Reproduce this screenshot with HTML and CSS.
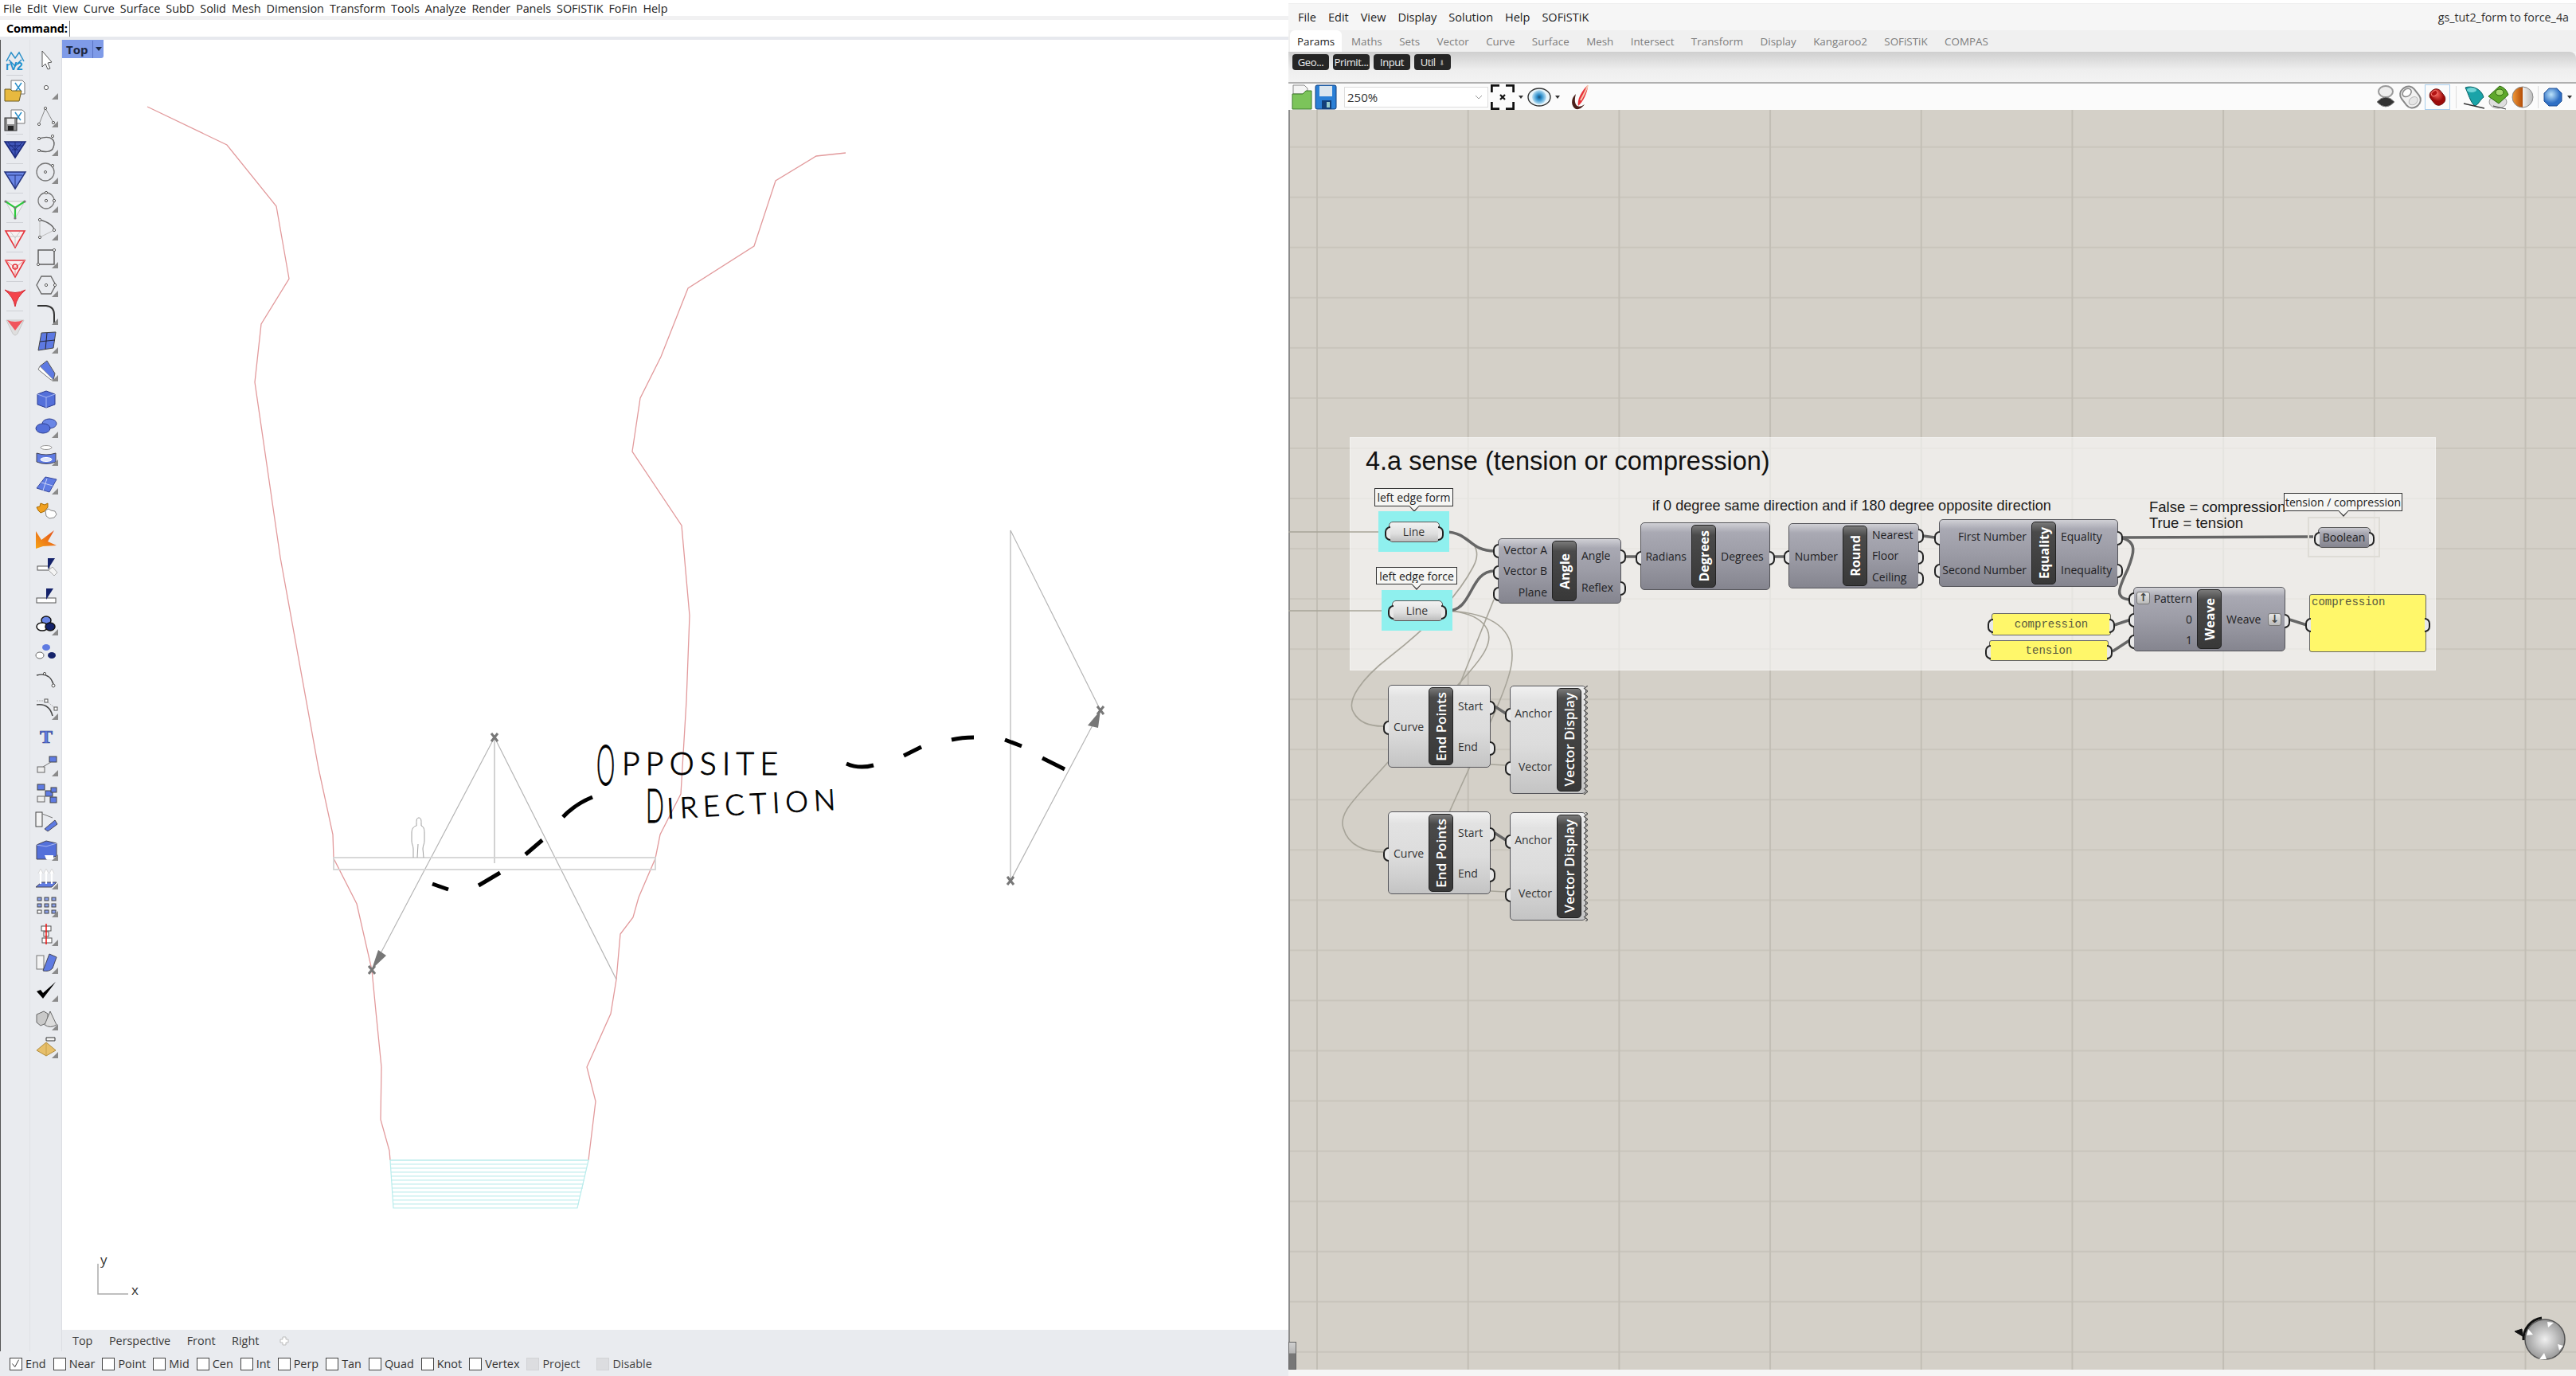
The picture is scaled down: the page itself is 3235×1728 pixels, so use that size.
FILE: index.html
```html
<!DOCTYPE html>
<html lang="en">
<head>
<meta charset="utf-8">
<title>Rhino and Grasshopper</title>
<link rel="stylesheet" href="styles.css">
</head>
<body>
<div class="app">
  <section class="left">
    <nav class="menu">
      <span>File</span><span>Edit</span><span>View</span><span>Curve</span><span>Surface</span><span>SubD</span><span>Solid</span><span>Mesh</span><span>Dimension</span><span>Transform</span><span>Tools</span><span>Analyze</span><span>Render</span><span>Panels</span><span>SOFiSTiK</span><span>FoFin</span><span>Help</span>
    </nav>
    <div class="strip-a"></div>
    <div class="cmd"><b>Command:</b><i class="caret"></i></div>
    <div class="strip-b"></div>
    <div class="body">
      <aside class="sidebar">
        <div class="col1">
          <div class="t1 sep"><svg class="ic" viewBox="0 0 28 28"><path d="M3 14 L9 3 L14 10 L19 3 L25 14 M6 12 L14 20 L22 12" fill="none" stroke="#2a8fc9" stroke-width="1.5"/><text x="2" y="25" class="rv">rV2</text></svg></div>
          <div class="t1"><svg class="ic" viewBox="0 0 28 28"><path d="M9 1 H23 L26 4 V18 H9 Z" fill="#fff" stroke="#777"/><path d="M14 4 L18 10 L22 4 M15 14 L18 10 L21 14" fill="none" stroke="#2a8fc9" stroke-width="1.5"/><path d="M1 12 H8 L10 14 H22 L19 27 H1 Z" fill="#e7b93f" stroke="#6b5a20"/></svg></div>
          <div class="t1 sep"><svg class="ic" viewBox="0 0 28 28"><path d="M9 1 H23 L26 4 V18 H9 Z" fill="#fff" stroke="#777"/><path d="M14 4 L18 10 L22 4 M15 14 L18 10 L21 14" fill="none" stroke="#2a8fc9" stroke-width="1.5"/><rect x="1" y="11" width="15" height="16" fill="#8d8d8d" stroke="#333"/><rect x="4" y="12" width="9" height="7" fill="#ececec"/><rect x="5" y="21" width="7" height="6" fill="#222"/></svg></div>
          <div class="t1 sep"><svg class="ic" viewBox="0 0 28 28"><path d="M1 4 L27 4 L14 24 Z" fill="#3f55b8" stroke="#1b2878" stroke-width="1.5"/><path d="M6 9 L22 9 M10 14 L18 14 M14 4 L14 24 M5 5 L14 14 L23 5" stroke="#1b2878" fill="none"/></svg></div>
          <div class="t1 sep"><svg class="ic" viewBox="0 0 28 28"><path d="M1 5 L27 5 L14 26 Z" fill="#6a86e6" stroke="#26357f" stroke-width="1.5"/><path d="M5 9 L23 9 M14 9 L14 26" stroke="#26357f"/></svg></div>
          <div class="t1 sep"><svg class="ic" viewBox="0 0 28 28"><path d="M2 5 L26 5 L14 26 Z" fill="#f4f4f4" stroke="#c4c4c4"/><path d="M2 5 L14 13 L26 5 M14 13 L14 25" stroke="#2cc83c" stroke-width="2.2" fill="none"/><circle cx="2" cy="5" r="1.6" fill="#777"/><circle cx="26" cy="5" r="1.6" fill="#777"/><circle cx="14" cy="13" r="1.6" fill="#777"/><circle cx="14" cy="26" r="1.6" fill="#777"/></svg></div>
          <div class="t1 sep"><svg class="ic" viewBox="0 0 28 28"><path d="M2 5 L26 5 L14 26 Z" fill="#f7f1f1" stroke="#e5323a" stroke-width="1.6"/><path d="M8 6 L14 14 L20 6 M14 14 L14 25 M7 12 L21 12" stroke="#c9c9c9" fill="none"/></svg></div>
          <div class="t1 sep"><svg class="ic" viewBox="0 0 28 28"><path d="M2 5 L26 5 L14 26 Z" fill="#f7f1f1" stroke="#e5323a" stroke-width="1.6"/><path d="M2 5 L14 14 L26 5 M14 14 L14 25" stroke="#e88" fill="none"/><circle cx="14" cy="13" r="3" fill="none" stroke="#e5323a" stroke-width="1.6"/></svg></div>
          <div class="t1 sep"><svg class="ic" viewBox="0 0 28 28"><path d="M1 5 Q14 12 27 5 Q16 14 14 26 Q12 14 1 5 Z" fill="#f4434b" stroke="#d62a33"/></svg></div>
          <div class="t1"><svg class="ic" viewBox="0 0 28 28"><path d="M3 6 L25 6 L17 23 Q14 27 11 23 Z" fill="#dedede" stroke="#c9c9c9"/><path d="M4 6 Q14 10 24 6 L14 19 Z" fill="#f0555c"/></svg></div>
        </div>
        <div class="col2">
          <div class="t2"><svg class="ic" viewBox="0 0 28 28"><path d="M9 3 L9 23 L13 19 L16 26 L19 25 L16 18 L21 17 Z" fill="#fff" stroke="#555"/></svg></div>
          <div class="t2 fly"><svg class="ic" viewBox="0 0 28 28"><circle cx="14" cy="14" r="2.6" fill="#fff" stroke="#555"/></svg></div>
          <div class="t2 fly"><svg class="ic" viewBox="0 0 28 28"><path d="M5 24 L13 4 L23 22" fill="none" stroke="#888"/><circle cx="5" cy="24" r="1.6" class="pt"/><circle cx="13" cy="4" r="1.6" class="pt"/><circle cx="23" cy="22" r="1.6" class="pt"/></svg></div>
          <div class="t2 fly"><svg class="ic" viewBox="0 0 28 28"><path d="M5 7 C22 2 26 10 23 18 C21 25 11 24 5 22" fill="none" stroke="#666" stroke-width="1.4"/><circle cx="5" cy="7" r="1.6" class="pt"/><circle cx="22" cy="4" r="1.6" class="pt"/><circle cx="5" cy="22" r="1.6" class="pt"/></svg></div>
          <div class="t2 fly"><svg class="ic" viewBox="0 0 28 28"><circle cx="13" cy="14" r="11" fill="none" stroke="#777" stroke-width="1.3"/><circle cx="13" cy="14" r="1.5" class="pt"/><circle cx="22" cy="6" r="1.6" class="pt"/></svg></div>
          <div class="t2 fly"><svg class="ic" viewBox="0 0 28 28"><circle cx="14" cy="14" r="10" fill="none" stroke="#777" stroke-width="1.3"/><circle cx="14" cy="4" r="1.6" class="pt"/><circle cx="14" cy="14" r="1.6" class="pt"/><circle cx="24" cy="14" r="1.6" class="pt"/></svg></div>
          <div class="t2 fly"><svg class="ic" viewBox="0 0 28 28"><path d="M6 3 C18 6 24 12 24 16" fill="none" stroke="#666" stroke-width="1.3"/><path d="M24 16 L6 25 M6 3 L6 25" stroke="#bbb" fill="none"/><circle cx="6" cy="3" r="1.6" class="pt"/><circle cx="24" cy="16" r="1.6" class="pt"/><circle cx="6" cy="25" r="1.6" class="pt"/></svg></div>
          <div class="t2 fly"><svg class="ic" viewBox="0 0 28 28"><rect x="4" y="5" width="20" height="18" fill="none" stroke="#555" stroke-width="1.4"/><circle cx="4" cy="23" r="1.6" class="pt"/><circle cx="24" cy="5" r="1.6" class="pt"/></svg></div>
          <div class="t2 fly"><svg class="ic" viewBox="0 0 28 28"><path d="M8 3 H20 L26 14 L20 25 H8 L2 14 Z" fill="none" stroke="#666" stroke-width="1.3"/><circle cx="14" cy="14" r="1.6" class="pt"/><circle cx="25" cy="14" r="1.6" class="pt"/></svg></div>
          <div class="t2 fly"><svg class="ic" viewBox="0 0 28 28"><path d="M3 4 H14 Q24 5 24 15 V26" fill="none" stroke="#333" stroke-width="2"/></svg></div>
          <div class="t2 fly"><svg class="ic" viewBox="0 0 28 28"><path d="M8 3 L26 2 L23 22 L4 25 Z" fill="#5d79e2" stroke="#444"/><path d="M15 3 L13 24 M6 14 L25 12" stroke="#223" /></svg></div>
          <div class="t2 fly"><svg class="ic" viewBox="0 0 28 28"><path d="M6 10 L15 3 L25 19 L23 27 Z" fill="#5d79e2" stroke="#555"/><path d="M6 10 L4 14 L20 27 L23 27" fill="#fff" stroke="#777"/></svg></div>
          <div class="t2"><svg class="ic" viewBox="0 0 28 28"><path d="M3 9 L14 5 L25 9 L25 22 L14 26 L3 22 Z" fill="#5470da" stroke="#2c3d8f"/><path d="M3 9 L14 13 L25 9 M14 13 L14 26" stroke="#a9b9f3" fill="none"/></svg></div>
          <div class="t2 fly"><svg class="ic" viewBox="0 0 28 28"><ellipse cx="18" cy="11" rx="9" ry="6" fill="#6a86e6" stroke="#2c3d8f"/><ellipse cx="10" cy="17" rx="9" ry="6" fill="#5470da" stroke="#2c3d8f"/></svg></div>
          <div class="t2 fly"><svg class="ic" viewBox="0 0 28 28"><ellipse cx="14" cy="5" rx="7" ry="2.5" fill="#fff" stroke="#999"/><path d="M2 12 Q14 16 26 12 V23 Q14 28 2 23 Z" fill="#5f7be2" stroke="#445"/><ellipse cx="14" cy="20" rx="7" ry="2.5" fill="#dfe6fb" stroke="#fff"/></svg></div>
          <div class="t2 fly"><svg class="ic" viewBox="0 0 28 28"><path d="M2 21 L13 7 L27 10 L18 26 Z" fill="#5f7be2" stroke="#3a4a9c"/><path d="M8 14 L22 18 M15 9 L10 24" stroke="#c9d3f7"/></svg></div>
          <div class="t2"><svg class="ic" viewBox="0 0 28 28"><path d="M2 10 L6 9 L7 5 L12 7 L16 5 L16 10 L12 15 L7 17 L4 14 Z" fill="#f0a020" stroke="#a86a00"/><path d="M13 14 L17 12 L20 14 L25 15 L27 19 L24 23 L18 24 L14 21 Z" fill="#fff" stroke="#888"/></svg></div>
          <div class="t2"><svg class="ic" viewBox="0 0 28 28"><defs><linearGradient id="ex" x1="0" y1="1" x2="1" y2="0"><stop offset="0" stop-color="#f7a416"/><stop offset="1" stop-color="#e24a1a"/></linearGradient></defs><path d="M1 4 L8 15 L24 3 L16 17 L27 22 L10 23 L1 26 Z" fill="url(#ex)"/></svg></div>
          <div class="t2"><svg class="ic" viewBox="0 0 28 28"><rect x="3" y="13" width="15" height="5" fill="#fff" stroke="#555"/><path d="M16 3 L25 3 L16 17 Z" fill="#14226a"/><path d="M17 18 L22 14 L28 21 L24 25 Z" fill="#f4f4f4" stroke="#aaa"/></svg></div>
          <div class="t2"><svg class="ic" viewBox="0 0 28 28"><rect x="2" y="17" width="24" height="6" fill="#fff" stroke="#555"/><path d="M14 5 L23 5 L14 19 Z" fill="#14226a"/></svg></div>
          <div class="t2 fly"><svg class="ic" viewBox="0 0 28 28"><ellipse cx="14" cy="10" rx="6" ry="5" fill="#6a86e6" stroke="#111" stroke-width="1.5"/><ellipse cx="9" cy="18" rx="7" ry="5" fill="#fff" stroke="#111" stroke-width="1.5"/><ellipse cx="19" cy="18" rx="6" ry="5" fill="#14226a" stroke="#111" stroke-width="1.5"/></svg></div>
          <div class="t2"><svg class="ic" viewBox="0 0 28 28"><ellipse cx="14" cy="8" rx="5" ry="4" fill="#5f7be2"/><ellipse cx="6" cy="18" rx="5" ry="4" fill="#fff" stroke="#666"/><ellipse cx="21" cy="18" rx="5" ry="4" fill="#14226a"/></svg></div>
          <div class="t2"><svg class="ic" viewBox="0 0 28 28"><path d="M2 8 Q18 4 23 19" fill="none" stroke="#444" stroke-width="1.4"/><circle cx="12" cy="6" r="1.6" class="pt"/><circle cx="23" cy="21" r="2" class="pt"/></svg></div>
          <div class="t2 fly"><svg class="ic" viewBox="0 0 28 28"><path d="M2 10 Q18 8 22 24" fill="none" stroke="#444" stroke-width="1.6"/><path d="M2 5 H14 L26 15" fill="none" stroke="#aaa" stroke-dasharray="2 1"/><rect x="12" y="3" width="4" height="4" class="pt"/><rect x="24" y="13" width="4" height="4" class="pt"/></svg></div>
          <div class="t2"><svg class="ic" viewBox="0 0 28 28"><text x="14" y="22" class="tee">T</text></svg></div>
          <div class="t2 fly"><svg class="ic" viewBox="0 0 28 28"><rect x="3" y="17" width="9" height="7" fill="#eee" stroke="#666"/><rect x="18" y="4" width="9" height="7" fill="#5f7be2" stroke="#444"/><path d="M10 17 L20 11" stroke="#777"/></svg></div>
          <div class="t2"><svg class="ic" viewBox="0 0 28 28"><rect x="3" y="3" width="9" height="7" fill="#5f7be2" stroke="#444"/><rect x="3" y="18" width="9" height="7" fill="#eee" stroke="#666"/><rect x="13" y="11" width="9" height="7" fill="#5f7be2" stroke="#444"/><rect x="20" y="7" width="7" height="6" fill="#5f7be2" stroke="#444"/><rect x="19" y="19" width="8" height="7" fill="#5f7be2" stroke="#444"/></svg></div>
          <div class="t2"><svg class="ic" viewBox="0 0 28 28"><rect x="1" y="3" width="8" height="18" fill="#f4f4f4" stroke="#444"/><path d="M12 24 L25 13 L28 18 L16 27 Z" fill="#5f7be2" stroke="#445"/><path d="M9 5 L22 10" stroke="#777"/></svg></div>
          <div class="t2 fly"><svg class="ic" viewBox="0 0 28 28"><path d="M2 8 L14 3 L27 6 V22 L14 26 H2 Z" fill="#5470da" stroke="#445"/><path d="M2 8 L14 10 L27 6" stroke="#a9b9f3" fill="none"/><path d="M12 21 H23 V26 H14 Z" fill="#fff"/></svg></div>
          <div class="t2 fly"><svg class="ic" viewBox="0 0 28 28"><path d="M1 26 L8 20 H27 L21 26 Z" fill="#5f7be2" stroke="#445"/><path d="M7 22 V7 M14 22 V7 M21 22 V7" stroke="#fff" stroke-width="2.2"/><path d="M4 9 L7 3 L10 9 M11 9 L14 3 L17 9 M18 9 L21 3 L24 9" fill="#fff" stroke="#bbb" stroke-width=".5"/></svg></div>
          <div class="t2 fly"><svg class="ic" viewBox="0 0 28 28"><g fill="#8aa0ea" stroke="#444"><rect x="3" y="4" width="5" height="4"/><rect x="12" y="4" width="5" height="4"/><rect x="21" y="4" width="5" height="4"/><rect x="3" y="12" width="5" height="4"/><rect x="12" y="12" width="5" height="4"/><rect x="21" y="12" width="5" height="4"/><rect x="3" y="20" width="5" height="4" fill="#fff"/><rect x="12" y="20" width="5" height="4"/><rect x="21" y="20" width="5" height="4"/></g></svg></div>
          <div class="t2 fly"><svg class="ic" viewBox="0 0 28 28"><rect x="8" y="4" width="12" height="6" fill="#fff" stroke="#555"/><rect x="9" y="19" width="12" height="6" fill="#fff" stroke="#555"/><rect x="11" y="11" width="6" height="6" fill="#fff" stroke="#555"/><path d="M14 1 V27" stroke="#e11" stroke-width="1.5"/></svg></div>
          <div class="t2 fly"><svg class="ic" viewBox="0 0 28 28"><rect x="2" y="6" width="9" height="17" fill="#f4f4f4" stroke="#777"/><path d="M10 25 L18 4 L27 8 L22 22 Q17 27 10 25 Z" fill="#5f7be2" stroke="#445"/></svg></div>
          <div class="t2 fly"><svg class="ic" viewBox="0 0 28 28"><path d="M2 15 L7 13 L10 17 L26 3 L10 24 Z" fill="#000"/></svg></div>
          <div class="t2 fly"><svg class="ic" viewBox="0 0 28 28"><path d="M2 9 L11 5 L16 8 V19 L7 23 L2 19 Z" fill="#c9c9c9" stroke="#666"/><path d="M19 5 L27 22 Q19 27 12 22 Z" fill="#dcdcdc" stroke="#666"/></svg></div>
          <div class="t2 fly"><svg class="ic" viewBox="0 0 28 28"><path d="M14 3 H25 V7 H14 Z" fill="#f4f4f4" stroke="#333"/><path d="M2 19 L14 9 L26 19 L14 26 Z" fill="#e7bf6a" stroke="#b08c3e"/><path d="M14 9 L14 26" stroke="#c89f4a"/></svg></div>
        </div>
      </aside>
      <div class="vp-wrap">
        <main class="viewport">
          <div class="vp-tab"><span>Top</span><i class="vp-arrow"></i></div>
          <svg class="scene" viewBox="78 50 1540 1620">
            <g class="red">
              <polyline points="185,134 285,182 347,259 363,350 328,407 320,480 352,700 400,965 418,1048 419,1078 448,1135 467,1218 472,1270 479,1340 478,1406 489,1445 490,1457"/>
              <polyline points="1062,192 1025,196 974,227 947,309 864,362 830,448 804,500 794,567 856,660 866,773 862,880 855,997 829,1048 823,1078 802,1127 795,1152 779,1173 774,1230 767,1273 737,1340 748,1383 739,1457"/>
            </g>
            <g class="pool">
              <path d="M490 1457 L494 1517 H725 L739 1457 Z"/>
              <path d="M490 1457 H739 M491 1462 H738 M491 1467 H737 M491 1472 H736 M491 1477 H735 M491 1482 H734 M492 1487 H733 M492 1492 H732 M492 1497 H730 M493 1502 H729 M493 1507 H728 M494 1512 H727"/>
            </g>
            <g class="thin">
              <path d="M621 926 L467 1218 M621 926 L774 1230 M621 926 V1084"/>
              <path d="M1269 666 V1106 M1269 666 L1382 892 M1269 1106 L1382 892"/>
            </g>
            <rect class="deck" x="419" y="1077" width="404" height="15"/>
            <path class="person" d="M526 1027 C523 1027 523 1030 523 1034 L523 1037 C519 1038 517 1041 517 1046 L517 1056 C517 1060 519 1062 519 1066 L519 1077 M526 1027 C529 1027 529 1030 529 1034 L529 1037 C532 1038 533 1041 533 1046 L533 1056 C533 1060 531 1062 531 1066 L532 1077 M525 1060 L524 1077"/>
            <g class="xm">
              <path d="M617 921 L625 931 M625 921 L617 931"/>
              <path d="M463 1213 L471 1223 M471 1213 L463 1223"/>
              <path d="M1265 1101 L1273 1111 M1273 1101 L1265 1111"/>
              <path d="M1378 887 L1386 897 M1386 887 L1378 897"/>
            </g>
            <path class="arrowhead" d="M475 1193 L485 1200 L467 1217 Z"/>
            <path class="arrowhead" d="M1382 892 L1366 911 L1379 914 Z"/>
            <g class="dash">
              <path d="M543 1110 L563 1117"/>
              <path d="M601 1112 L628 1096"/>
              <path d="M660 1073 L681 1055"/>
              <path d="M707 1026 Q722 1010 744 1001"/>
              <path d="M1063 959 Q1079 966 1097 961"/>
              <path d="M1135 949 L1157 938"/>
              <path d="M1195 929 Q1208 926 1223 926"/>
              <path d="M1262 929 L1283 937"/>
              <path d="M1309 952 L1337 966"/>
            </g>
            <g class="hand">
              <text class="h-cap" transform="translate(749 986) scale(.42 1)">O</text>
              <text class="h-low" x="781" y="973" textLength="196">PPOSITE</text>
              <text class="h-cap2" transform="translate(811 1033) scale(.5 1)">D</text>
              <text class="h-low2" transform="translate(838 1028) rotate(-3)" textLength="212">IRECTION</text>
            </g>
            <g class="axis">
              <path d="M123 1587 V1625 H161"/>
              <text x="126" y="1588">y</text>
              <text x="165" y="1626">x</text>
            </g>
          </svg>
        </main>
        <div class="vp-tabs">
          <span class="vt active">Top</span><span class="vt">Perspective</span><span class="vt">Front</span><span class="vt">Right</span>
          <svg class="plus" viewBox="0 0 12 12"><path d="M4 1 H8 V4 H11 V8 H8 V11 H4 V8 H1 V4 H4 Z" fill="#fff" stroke="#bbb"/></svg>
        </div>
      </div>
    </div>
    <footer class="status">
      <label class="snap"><i class="box"><svg viewBox="0 0 16 16"><path d="M3 8 L7 13 L13 2" fill="none" stroke="#333" stroke-width="1.2"/></svg></i>End</label>
      <label class="snap"><i class="box"></i>Near</label>
      <label class="snap"><i class="box"></i>Point</label>
      <label class="snap"><i class="box"></i>Mid</label>
      <label class="snap"><i class="box"></i>Cen</label>
      <label class="snap"><i class="box"></i>Int</label>
      <label class="snap"><i class="box"></i>Perp</label>
      <label class="snap"><i class="box"></i>Tan</label>
      <label class="snap"><i class="box"></i>Quad</label>
      <label class="snap"><i class="box"></i>Knot</label>
      <label class="snap"><i class="box"></i>Vertex</label>
      <label class="snap off project"><i class="box"></i>Project</label>
      <label class="snap off"><i class="box"></i>Disable</label>
    </footer>
  </section>

  <section class="gh">
    <div class="gh-strip"></div>
    <nav class="gh-menu">
      <span>File</span><span>Edit</span><span>View</span><span>Display</span><span>Solution</span><span>Help</span><span>SOFiSTiK</span>
      <em class="doc-title">gs_tut2_form to force_4a</em>
    </nav>
    <nav class="gh-tabs">
      <span class="gt active">Params</span><span class="gt">Maths</span><span class="gt">Sets</span><span class="gt">Vector</span><span class="gt">Curve</span><span class="gt">Surface</span><span class="gt">Mesh</span><span class="gt">Intersect</span><span class="gt">Transform</span><span class="gt">Display</span><span class="gt">Kangaroo2</span><span class="gt">SOFiSTiK</span><span class="gt">COMPAS</span>
    </nav>
    <div class="gh-ribbon">
      <span class="rb">Geo...</span><span class="rb">Primit...</span><span class="rb">Input</span><span class="rb">Util <i class="rb-arrow">⬇</i></span>
    </div>
    <div class="gh-tools">
      <svg class="gi w26" viewBox="0 0 26 32"><path d="M2 1 H16 L20 5 V12 H2 Z" fill="#f4f4f4" stroke="#888"/><path d="M1 12 H14 L18 8 H25 V31 H1 Z" fill="#7cc45a" stroke="#3d7a2a"/></svg>
      <svg class="gi w28" viewBox="0 0 28 32"><rect x="1" y="1" width="26" height="30" rx="2" fill="#2a7fd6" stroke="#123f7a"/><rect x="6" y="2" width="16" height="13" fill="#dbe6ef"/><rect x="9" y="20" width="12" height="11" fill="#123f7a"/><rect x="15" y="22" width="4" height="7" fill="#9cc"/></svg>
      <div class="zoombox"><span>250%</span><svg class="chev" viewBox="0 0 10 6"><path d="M1 1 L5 5 L9 1" fill="none" stroke="#999"/></svg></div>
      <svg class="gi w30" viewBox="0 0 30 32"><path d="M1 10 V1 H11 M19 1 H29 V10 M29 22 V31 H19 M11 31 H1 V22" fill="none" stroke="#111" stroke-width="3.5"/><path d="M12 13 L18 19 M18 13 L12 19" stroke="#111" stroke-width="2.2"/></svg>
      <i class="tiny-drop"></i>
      <svg class="gi w30" viewBox="0 0 30 32"><defs><radialGradient id="eye"><stop offset="0" stop-color="#1b4f78"/><stop offset=".35" stop-color="#2c8ecb"/><stop offset="1" stop-color="#bfe3f5"/></radialGradient></defs><ellipse cx="15" cy="16" rx="14" ry="11" fill="#eaf5fa" stroke="#333" stroke-width="1.4"/><circle cx="15" cy="16" r="9" fill="url(#eye)"/></svg>
      <i class="tiny-drop"></i>
      <svg class="gi w28 brush" viewBox="0 0 28 32"><path d="M24 1 C24 10 18 22 12 27 C10 20 16 8 24 1 Z" fill="#e8323a"/><path d="M24 1 C22 8 18 14 15 20" stroke="#f7c7b0" stroke-width="2" fill="none"/><path d="M9 12 C2 18 3 28 9 31 C14 32 18 28 20 25 C16 28 11 29 9 25 C7 21 8 16 9 12 Z" fill="#4a1f1a"/></svg>
      <div class="tools-right">
        <svg class="gi w26" viewBox="0 0 26 32"><ellipse cx="13" cy="9" rx="9" ry="7" fill="#eee" stroke="#999" stroke-width="2"/><path d="M2 22 Q13 10 24 22 Q13 34 2 22 Z" fill="#333" stroke="#888"/></svg>
        <svg class="gi w30" viewBox="0 0 30 32"><g transform="rotate(-38 15 16)"><rect x="5" y="2" width="20" height="28" rx="9" fill="#f2f2f2" stroke="#888" stroke-width="2"/><ellipse cx="15" cy="9" rx="6" ry="4.5" fill="#fff" stroke="#888" stroke-width="1.5"/><ellipse cx="15" cy="22" rx="6" ry="4.5" fill="#e6e6e6" stroke="#bbb"/></g></svg>
        <span class="sel-tool"><svg class="gi w28" viewBox="0 0 28 32"><defs><radialGradient id="redg" cx=".6" cy=".3"><stop offset="0" stop-color="#ff6a60"/><stop offset="1" stop-color="#9c0a0a"/></radialGradient></defs><g transform="rotate(-38 14 16)"><rect x="5" y="4" width="18" height="24" rx="8" fill="url(#redg)" stroke="#6a0808"/><ellipse cx="14" cy="9" rx="5" ry="3.5" fill="#b31414" stroke="#ff8a80"/></g></svg></span>
        <i class="div-v"></i>
        <svg class="gi w28" viewBox="0 0 28 32"><path d="M4 4 C12 1 24 5 27 16 C22 20 20 26 16 27 C10 22 8 12 4 4 Z" fill="#1aa3a8" stroke="#0b5f63"/><path d="M2 24 L28 30" stroke="#333" stroke-width="1.4"/><ellipse cx="12" cy="7" rx="6" ry="3" fill="#71d4d6"/></svg>
        <svg class="gi w28" viewBox="0 0 28 32"><ellipse cx="14" cy="22" rx="11" ry="8" fill="#dedede" stroke="#999"/><path d="M2 15 L16 2 Q24 4 27 13 L15 24 Z" fill="#5ea82b" stroke="#2c6610"/><ellipse cx="16" cy="10" rx="5" ry="4" fill="#a6d870" stroke="#2c6610"/><path d="M8 27 L24 31" stroke="#333"/></svg>
        <svg class="gi w28" viewBox="0 0 28 32"><defs><linearGradient id="halfg" x1="0" x2="1"><stop offset="0" stop-color="#f29a3a"/><stop offset=".5" stop-color="#b34c06"/><stop offset=".5" stop-color="#eee"/><stop offset="1" stop-color="#bbb"/></linearGradient></defs><circle cx="14" cy="16" r="13" fill="url(#halfg)" stroke="#888"/></svg>
        <i class="div-v narrow"></i>
        <svg class="gi w26" viewBox="0 0 26 32"><defs><radialGradient id="blu" cx=".4" cy=".35"><stop offset="0" stop-color="#bde4fb"/><stop offset="1" stop-color="#2f6fc4"/></radialGradient></defs><path d="M8 5 H18 L24 11 V21 L18 27 H8 L2 21 V11 Z" fill="url(#blu)" stroke="#1e4f94"/></svg>
        <i class="tiny-drop"></i>
      </div>
    </div>

    <div class="canvas">
      <div class="group"><h2 class="group-title">4.a sense (tension or compression)</h2></div>

      <svg class="wires" viewBox="1618 138 1617 1582">
        <g class="w-thin">
          <path d="M1618 668 H1744"/>
          <path d="M1618 767 H1748"/>
          <path d="M1815 668 C1850 672 1862 690 1850 712 C1830 750 1790 790 1745 825 C1710 852 1690 880 1700 895 C1707 908 1720 912 1737 912"/>
          <path d="M1818 767 C1860 770 1878 790 1866 815 C1855 840 1790 900 1745 955 C1705 1000 1680 1020 1687 1040 C1693 1062 1715 1070 1737 1070"/>
          <path d="M1818 767 C1875 770 1905 790 1898 835 C1892 870 1860 930 1820 1020"/>
          <path d="M1876 753 L1833 860"/>
          <path d="M1872 960 L1891 961"/>
          <path d="M1872 1119 L1891 1120"/>
        </g>
        <g class="w-thick">
          <path d="M1815 668 C1845 668 1845 692 1877 692"/>
          <path d="M1818 767 C1850 767 1845 717 1877 717"/>
          <path d="M2041 699 H2055"/>
          <path d="M2228 699 H2241"/>
          <path d="M2415 673 L2430 675"/>
          <path d="M2665 675 L2905 674"/>
          <path d="M2663 675 C2685 680 2680 695 2672 715 C2660 740 2655 752 2676 753"/>
          <path d="M2655 785 L2676 778"/>
          <path d="M2653 818 L2676 803"/>
          <path d="M2875 778 L2897 785"/>
          <path d="M1877 887 L1891 896"/>
          <path d="M1877 1046 L1891 1055"/>
        </g>
      </svg>

      <p class="note note-a">if 0 degree same direction and if 180 degree opposite direction</p>
      <p class="note note-b">False = compression<br>True = tension</p>

      <div class="tip tip-a">left edge form</div>
      <div class="sel sel-a"><div class="param">Line</div></div>
      <div class="tip tip-b">left edge force</div>
      <div class="sel sel-b"><div class="param">Line</div></div>

      <div class="node n-angle">
        <div class="ins"><span class="p">Vector A</span><span class="p">Vector B</span><span class="p">Plane</span></div>
        <div class="cap"><span>Angle</span></div>
        <div class="outs"><span class="p">Angle</span><span class="p">Reflex</span></div>
      </div>
      <div class="node n-degrees">
        <div class="ins"><span class="p">Radians</span></div>
        <div class="cap"><span>Degrees</span></div>
        <div class="outs"><span class="p">Degrees</span></div>
      </div>
      <div class="node n-round">
        <div class="ins"><span class="p">Number</span></div>
        <div class="cap"><span>Round</span></div>
        <div class="outs"><span class="p">Nearest</span><span class="p">Floor</span><span class="p">Ceiling</span></div>
      </div>
      <div class="node n-equality">
        <div class="ins"><span class="p">First Number</span><span class="p">Second Number</span></div>
        <div class="cap"><span>Equality</span></div>
        <div class="outs"><span class="p">Equality</span><span class="p">Inequality</span></div>
      </div>
      <div class="node n-weave">
        <div class="ins"><span class="p">Pattern<i class="mini up">↑</i></span><span class="p">0</span><span class="p">1</span></div>
        <div class="cap"><span>Weave</span></div>
        <div class="outs"><span class="p">Weave<i class="mini down">↓</i></span></div>
      </div>

      <div class="tip tip-c">tension / compression</div>
      <div class="sel sel-c"><div class="param dark">Boolean</div></div>

      <div class="panel panel-a p-in p-out">compression</div>
      <div class="panel panel-b p-in p-out">tension</div>
      <div class="panel panel-c p-in p-out">compression</div>

      <div class="node light n-ep1">
        <div class="ins"><span class="p">Curve</span></div>
        <div class="cap"><span>End Points</span></div>
        <div class="outs"><span class="p">Start</span><span class="p">End</span></div>
      </div>
      <div class="node light n-vd1">
        <div class="ins"><span class="p">Anchor</span><span class="p">Vector</span></div>
        <div class="cap"><span>Vector Display</span></div>
      </div>
      <div class="node light n-ep2">
        <div class="ins"><span class="p">Curve</span></div>
        <div class="cap"><span>End Points</span></div>
        <div class="outs"><span class="p">Start</span><span class="p">End</span></div>
      </div>
      <div class="node light n-vd2">
        <div class="ins"><span class="p">Anchor</span><span class="p">Vector</span></div>
        <div class="cap"><span>Vector Display</span></div>
      </div>

      <svg class="overlay" viewBox="1618 138 1617 1582">
        <defs>
          <pattern id="zz" x="1986" y="861" width="8" height="7" patternUnits="userSpaceOnUse"><path d="M8 0 L3.5 3.5 L8 7 Z" fill="#d4d0c8"/><path d="M8 0 L3.5 3.5 L8 7" fill="none" stroke="#555" stroke-width="1.2"/></pattern>
          <radialGradient id="cmp"><stop offset="0" stop-color="#f0f0f0"/><stop offset="1" stop-color="#9a9a9a"/></radialGradient>
        </defs>
        <rect x="1986" y="861" width="8" height="137" fill="url(#zz)"/>
        <rect x="1986" y="1020" width="8" height="137" fill="url(#zz)"/>
        <circle cx="3196" cy="1682" r="25" fill="url(#cmp)" stroke="#555" stroke-width="1.5"/>
        <path d="M3169 1683 A27 27 0 0 1 3192 1655" fill="none" stroke="#111" stroke-width="3"/>
        <path d="M3158 1672 L3167 1669 L3168 1678 Z" fill="#111" stroke="#111"/>
        <path d="M3199 1660 L3207 1661 L3200 1667 Z M3212 1688 L3219 1690 L3214 1696 Z M3189 1707 L3195 1699 L3198 1707 Z M3173 1677 L3181 1676 L3175 1669 Z" fill="#fff"/>
      </svg>
      <div class="thumb"></div>
    </div>
    <div class="gh-foot"></div>
  </section>
</div>
</body>
</html>
```
FILE: styles.css
```css
* { box-sizing: border-box; }
html, body { margin: 0; padding: 0; }
body { width: 3235px; height: 1728px; overflow: hidden; background: #fff; font-family: "Open Sans", "Noto Sans", sans-serif; color: #222; }
.app { display: flex; width: 3235px; height: 1728px; }

/* Rhino side */
.left { width: 1618px; height: 1728px; display: flex; flex-direction: column; background: #fff; }
.menu { height: 20px; display: flex; gap: 7px; padding-left: 4px; align-items: center; font-size: 14.4px; color: #222; white-space: nowrap; }
.strip-a { height: 5px; background: #f1f1f2; }
.cmd { height: 21px; display: flex; align-items: center; padding-left: 8px; font-size: 14.5px; background: #fff; }
.cmd b { font-weight: 700; color: #000; letter-spacing: -.2px; }
.caret { width: 1px; height: 20px; background: #777; margin-left: 2px; }
.strip-b { height: 4px; background: #e7e9ee; }
.body { flex: 1; display: flex; min-height: 0; }
.sidebar { width: 78px; display: flex; background: #e9ebef linear-gradient(#555, #555) 0 0 / 1px 100% no-repeat; }
.col1 { width: 38px; padding-top: 8px; border-right: 1px solid #dfe1e6; }
.col2 { width: 40px; padding-top: 7px; border-right: 1px solid #dcdee3; }
.t1, .t2 { position: relative; display: flex; align-items: center; justify-content: center; }
.t1 { height: 37px; }
.t2 { height: 35.43px; }
.ic { width: 28px; height: 28px; display: block; overflow: visible; }
.t1.sep::after { content: ""; position: absolute; left: 8px; right: 8px; bottom: 0; height: 1px; background: #cfd1d6; }
.t2.fly::after { content: ""; position: absolute; right: 4px; bottom: 3px; border-left: 8px solid transparent; border-bottom: 8px solid #8a8a8a; }
.pt { fill: #fff; stroke: #555; }
.rv { font: 700 14px "Liberation Sans", sans-serif; fill: #1e8ecb; letter-spacing: -.5px; }
.tee { font: 700 24px "Liberation Serif", serif; fill: #5f7be2; stroke: #2c3d8f; stroke-width: .7; text-anchor: middle; }

.vp-wrap { flex: 1; display: flex; flex-direction: column; min-width: 0; }
.viewport { position: relative; flex: 1; background: #fff; overflow: hidden; }
.scene { display: block; width: 1540px; height: 1620px; }
.vp-tab { position: absolute; left: 0; top: 0; width: 52px; height: 23px; background: #7f9be8; display: flex; align-items: center; padding-left: 5px; font-size: 15px; font-weight: 700; color: #1c2740; border-radius: 0 0 3px 0; }
.vp-arrow { margin-left: 6px; padding-left: 5px; border-left: 1px solid #5b74c4; height: 22px; position: relative; width: 14px; }
.vp-arrow::after { content: ""; position: absolute; left: 3px; top: 8px; border: 4px solid transparent; border-top: 5px solid #1c2740; }
.vp-tabs { height: 27px; background: #e9ebef; display: flex; align-items: center; padding-left: 13px; gap: 20.5px; font-size: 14.4px; color: #3a3a3a; }
.plus { width: 12px; height: 12px; margin-left: 5px; }
.red polyline { fill: none; stroke: #e29a9c; stroke-width: 1.3; }
.pool path { fill: none; stroke: #b9ecec; stroke-width: 1.2; }
.thin path { fill: none; stroke: #b5b5b5; stroke-width: 1.2; }
.deck { fill: none; stroke: #d4d4d4; stroke-width: 1.8; }
.person { fill: none; stroke: #a0a0a0; stroke-width: 1; }
.xm path { fill: none; stroke: #777; stroke-width: 3; }
.arrowhead { fill: #777; }
.dash path { fill: none; stroke: #000; stroke-width: 5; stroke-linecap: butt; }
.hand text { font-family: "Lato", "Noto Sans", sans-serif; font-weight: 300; fill: #000; stroke: #000; stroke-width: .9; }
.h-cap { font-size: 70px; stroke-width: 1.4; }
.h-cap2 { font-size: 60px; }
.h-low { font-size: 39px; }
.h-low2 { font-size: 36px; }
.axis path { fill: none; stroke: #aaa; stroke-width: 1.5; }
.axis text { font: 17px "Open Sans", sans-serif; fill: #333; }

.status { height: 31px; background: #e9ebef; display: flex; align-items: center; gap: 9px; padding-left: 12px; font-size: 14.4px; color: #333; }
.snap { display: flex; align-items: center; gap: 4px; }
.box { width: 16px; height: 16px; border: 1.5px solid #444; background: #fff; display: block; }
.box svg { display: block; width: 13px; height: 13px; }
.snap.off { color: #444; }
.snap.off .box { background: #dcdde0; border-color: #d2d3d6; }
.snap.project { margin-right: 12px; }

/* Grasshopper side */
.gh { width: 1617px; height: 1728px; display: flex; flex-direction: column; background: #f5f5f5; }
.gh-strip { height: 5px; background: #fff; border-bottom: 1px solid #eee; }
.gh-menu { height: 33px; display: flex; align-items: center; gap: 15px; padding-left: 12px; padding-right: 9px; font-size: 14.5px; color: #222; background: #f6f6f6; }
.doc-title { margin-left: auto; font-style: normal; font-size: 14.3px; color: #333; }
.gh-tabs { height: 27px; display: flex; align-items: flex-end; padding-left: 2px; background: #f0f0f0; font-size: 13.4px; color: #7c7c7c; }
.gt { padding: 0 10.7px; height: 27px; display: flex; align-items: center; }
.gt.active { color: #222; background: #fff; border-radius: 6px 6px 0 0; padding: 0 9px; margin-right: 1px; }
.gh-ribbon { height: 38px; display: flex; gap: 5px; padding: 3px 0 0 5px; background: linear-gradient(#cfcfcf, #eeeeee 60%, #f3f3f3); border-radius: 0 8px 0 0; }
.rb { width: 46px; height: 20px; background: #262626; color: #eee; border-radius: 4px; font-size: 13px; display: flex; align-items: center; justify-content: center; white-space: nowrap; letter-spacing: -.4px; }
.rb-arrow { font-style: normal; color: #999; font-size: 9px; margin-left: 4px; }
.gh-tools { height: 35px; border-top: 2px solid #b0b0b0; background: #fbfbfb; display: flex; align-items: center; padding: 0 3px 0 4px; gap: 3px; }
.gi { height: 32px; display: block; flex: none; }
.w26 { width: 26px; }
.w28 { width: 28px; }
.w30 { width: 30px; }
.zoombox { width: 181px; height: 26px; border: 1.5px solid #ddd; background: #fff; display: flex; align-items: center; justify-content: space-between; padding: 0 6px 0 3px; font-size: 15px; color: #333; margin-left: 6px; }
.chev { width: 10px; height: 6px; }
.tiny-drop { width: 0; height: 0; border: 3px solid transparent; border-top: 4px solid #333; margin: 4px 2px 0; flex: none; }
.brush { margin-left: 6px; }
.tools-right { margin-left: auto; display: flex; align-items: center; gap: 3px; }
.sel-tool { width: 32px; height: 32px; border: 1px solid #a8cdec; display: flex; align-items: center; justify-content: center; }
.sel-tool .gi { height: 28px; }
.div-v { width: 1px; height: 28px; background: #ddd; margin: 0 4px; }
.div-v.narrow { margin: 0 2px; }
.gh-foot { height: 8px; background: #f5f5f5; }

.canvas {
  position: relative; flex: 1; overflow: hidden;
  background-color: #d4d0c8;
  background-image: linear-gradient(to right, #c2beb5 2px, transparent 2px), linear-gradient(#c9c5bc 2px, transparent 2px);
  background-size: 189.7px 63.05px;
  background-position: 35px 0, 0 45.7px;
  box-shadow: inset 2px 0 0 #8c8c8c;
}
.wires, .overlay { position: absolute; left: 0; top: 0; width: 1617px; height: 1582px; }
.w-thin path { fill: none; stroke: #a7a499; stroke-width: 1.6; }
.w-thick path { fill: none; stroke: #666; stroke-width: 3.5; }
.thumb { position: absolute; left: 0; bottom: 0; width: 10px; height: 35px; background: linear-gradient(#d0d0d0, #b5b5b5 40%, #777 42%, #777); border: 1px solid #666; }

.group { position: absolute; left: 77px; top: 411px; width: 1364px; height: 293px; background: rgba(255, 255, 255, .58); border: 1px solid rgba(255, 255, 255, .35); padding: 11px 19px; }
.group-title { margin: 0; font: 400 32.5px/36px "Liberation Sans", Arial, sans-serif; color: #111; }
.note { position: absolute; margin: 0; font-family: "Liberation Sans", Arial, sans-serif; color: #1a1a1a; white-space: nowrap; }
.note-a { left: 457px; top: 486px; font-size: 18.1px; line-height: 22px; }
.note-b { left: 1081px; top: 489px; font-size: 18.5px; line-height: 20px; }

.tip { position: absolute; background: #f6f6f4; border: 1.5px solid #333; font-size: 14px; display: flex; align-items: center; justify-content: center; color: #222; white-space: nowrap; }
.tip::before, .tip::after { content: ""; position: absolute; left: 50%; transform: translateX(-50%); border-left: 7px solid transparent; border-right: 7px solid transparent; }
.tip::before { top: 100%; border-top: 8px solid #333; }
.tip::after { top: calc(100% - 1px); border-top: 7px solid #f6f6f4; }
.tip-a { left: 108px; top: 475px; width: 99px; height: 23px; }
.tip-b { left: 110px; top: 574px; width: 102px; height: 22px; }
.tip-c { left: 1250px; top: 481px; width: 149px; height: 23px; }

.sel { position: absolute; display: flex; align-items: center; justify-content: center; }
.sel-a { left: 113px; top: 504px; width: 89px; height: 51px; background: #8ff0ee; }
.sel-b { left: 117px; top: 603px; width: 89px; height: 51px; background: #8ff0ee; }
.sel-c { left: 1280px; top: 511px; width: 91px; height: 51px; border: 2px solid #dedcd6; }
.param { position: relative; width: 64px; height: 26px; border: 1.5px solid #555; border-radius: 5px; background: linear-gradient(#f2f2f2, #dedede 60%, #bdbdbd); font-size: 14px; display: flex; align-items: center; justify-content: center; color: #333; }
.param.dark { width: 66px; background: linear-gradient(#c8c8ce, #a5a5af 30%, #85858f); color: #222; }
.param::before, .param::after, .p-in::before, .p-out::after { content: ""; position: absolute; top: 50%; width: 5px; height: 14px; margin-top: -7px; border: 2.5px solid #222; background: #e8e8e8; }
.param::before, .p-in::before { left: -6px; border-right: 0; border-radius: 8px 0 0 8px; }
.param::after, .p-out::after { right: -6px; border-left: 0; border-radius: 0 8px 8px 0; }

.node { position: absolute; display: flex; border: 1.5px solid #55555a; border-radius: 5px; background: linear-gradient(#d0d0d5, #a9a9b3 14%, #9c9ca6 50%, #85858f); font-size: 14px; color: #1f1f24; padding: 0; }
.node.light { background: linear-gradient(#f1f1f1, #e2e2e2 14%, #dcdcdc 55%, #c4c4c4); color: #333; }
.ins, .outs { display: flex; flex-direction: column; justify-content: space-around; }
.outs { flex: 1; }
.p { position: relative; display: flex; align-items: center; height: 22px; white-space: nowrap; }
.ins .p { justify-content: flex-end; padding-right: 6px; }
.outs .p { padding-left: 6px; }
.ins .p::before, .outs .p::after { content: ""; position: absolute; top: 50%; width: 5px; height: 14px; margin-top: -7px; border: 2.5px solid #222; background: #e8e8e8; }
.ins .p::before { left: -7px; border-right: 0; border-radius: 8px 0 0 8px; }
.outs .p::after { right: -7px; border-left: 0; border-radius: 0 8px 8px 0; }
.cap { margin: 2px 0; width: 31px; flex: none; border-radius: 5px; border: 1px solid #222; background: linear-gradient(#7a7a7a, #4a4a4a 12px, #383838); display: flex; align-items: center; justify-content: center; }
.cap span { writing-mode: vertical-rl; transform: rotate(180deg); color: #fff; font-size: 16px; font-weight: 700; white-space: nowrap; line-height: 1; }
.light .cap span { font-size: 17px; font-weight: 600; }
.mini { font-style: normal; position: absolute; top: 3px; width: 17px; height: 16px; border: 1px solid #777; border-radius: 3px; background: linear-gradient(#e6e6e6, #bbb); font-size: 14px; font-weight: 700; line-height: 13px; text-align: center; color: #444; font-family: "DejaVu Sans", sans-serif; }
.mini.up { left: 3px; }
.mini.down { right: 4px; }

.n-angle { left: 263px; top: 538px; width: 155px; height: 82px; }
.n-angle .ins { width: 67px; }
.n-degrees { left: 442px; top: 518px; width: 163px; height: 85px; }
.n-degrees .ins { width: 63px; }
.n-round { left: 628px; top: 519px; width: 164px; height: 82px; }
.n-round .ins { width: 67px; }
.n-equality { left: 817px; top: 514px; width: 225px; height: 85px; }
.n-equality .ins { width: 115px; }
.n-weave { left: 1061px; top: 599px; width: 191px; height: 81px; }
.n-weave .ins { width: 79px; }
.n-ep1, .n-ep2 { left: 125px; width: 129px; height: 104px; }
.n-ep1 { top: 722px; }
.n-ep2 { top: 881px; }
.n-ep1 .ins, .n-ep2 .ins { width: 50px; }
.n-vd1, .n-vd2 { left: 278px; width: 96px; height: 136px; }
.n-vd1 { top: 723px; }
.n-vd2 { top: 882px; }
.n-vd1 .ins, .n-vd2 .ins { width: 58px; }

.panel { position: absolute; background: #fff76a; border: 1.5px solid #666; border-radius: 3px; font: 14px "Liberation Mono", "Courier New", monospace; color: #5a5a40; display: flex; align-items: center; justify-content: center; }
.panel-a { left: 883px; top: 632px; width: 150px; height: 28px; }
.panel-b { left: 880px; top: 666px; width: 150px; height: 26px; }
.panel-c { left: 1282px; top: 608px; width: 147px; height: 73px; align-items: flex-start; justify-content: flex-start; padding: 1px 2px; }
```
